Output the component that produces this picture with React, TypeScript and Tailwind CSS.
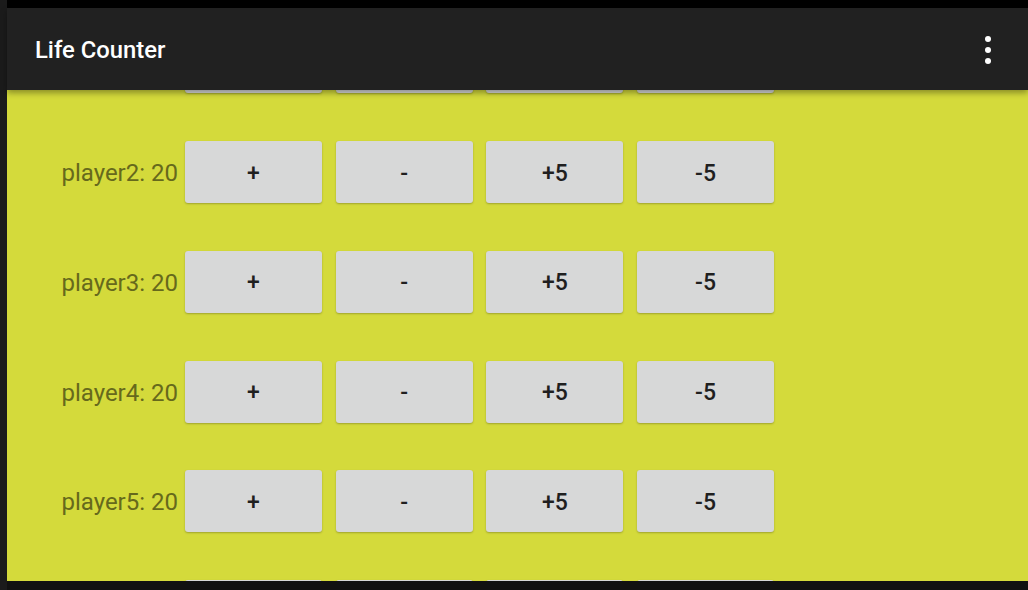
import { useState } from "react";

const players = ["player1", "player2", "player3", "player4", "player5", "player6"];
const steps = [
    { label: "+", delta: 1 },
    { label: "-", delta: -1 },
    { label: "+5", delta: 5 },
    { label: "-5", delta: -5 },
];

export default function App() {
    const [life, setLife] = useState<number[]>(players.map(() => 20));

    const change = (idx: number, delta: number) => {
        setLife((prev) => prev.map((v, i) => (i === idx ? v + delta : v)));
    };

    return (
        <div className="flex w-[1028px] h-[590px] bg-[#111111] overflow-hidden" style={{ fontFamily: "Roboto, 'Noto Sans', sans-serif" }}>
            <div className="w-[7px] h-full bg-[#1b1b1b] shrink-0" />
            <div className="flex-1 flex flex-col">
                <div className="h-[8px] bg-black" />
                {/* app bar */}
                <div className="relative z-10 h-[82px] bg-[#212121] flex items-center justify-between pl-[28px] pr-[37px] shadow-[0_3px_6px_rgba(0,0,0,0.35)]">
                    <div className="text-white text-[23.8px] leading-[28px] font-medium pt-[2px]">Life Counter</div>
                    <div className="flex flex-col gap-[5px] pt-[1px]">
                        <span className="w-[6px] h-[6px] rounded-full bg-white" />
                        <span className="w-[6px] h-[6px] rounded-full bg-white" />
                        <span className="w-[6px] h-[6px] rounded-full bg-white" />
                    </div>
                </div>
                {/* scrolled list */}
                <div className="h-[491px] bg-[#d4da3b] overflow-hidden">
                    <div className="mt-[-82.6px]">
                        {players.map((p, i) => (
                            <div key={p} className="h-[109.75px] flex items-center">
                                <div className="w-[171px] text-right text-[24px] leading-[28px] pt-[2px] text-[#66691c] whitespace-nowrap">
                                    {p}: {life[i]}
                                </div>
                                <div className="flex gap-[13.7px] ml-[7px]">
                                    {steps.map((s) => (
                                        <button
                                            key={s.label}
                                            onClick={() => change(i, s.delta)}
                                            className="w-[137px] h-[62px] pt-[3px] rounded-[3px] bg-[#d7d8d8] text-[#1f1f1f] text-[23px] leading-[28px] font-medium shadow-[0_1px_2px_rgba(0,0,0,0.25)]"
                                        >
                                            {s.label}
                                        </button>
                                    ))}
                                </div>
                            </div>
                        ))}
                    </div>
                </div>
                <div className="h-[9px] bg-[#111111]" />
            </div>
        </div>
    );
}
